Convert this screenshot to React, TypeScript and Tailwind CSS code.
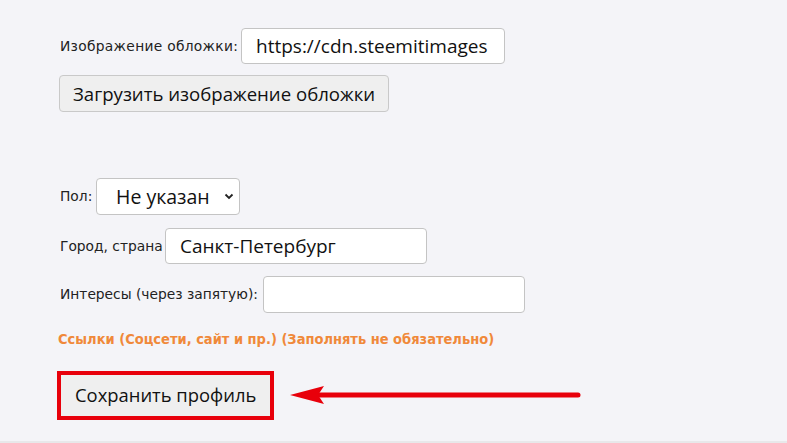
import React from "react";

const labelFont = { fontFamily: "'DejaVu Sans', Tahoma, sans-serif" };

const Field = ({ label, labelCls, children }: { label: string; labelCls: string; children: React.ReactNode }) => (
    <div className="flex items-center gap-[3px]">
        <span className={`text-[13.8px] text-[#222] whitespace-nowrap ${labelCls}`} style={labelFont}>{label}</span>
        {children}
    </div>
);

const inputCls =
    "h-[36px] rounded-[4px] border border-[#c4c4c4] bg-white px-[14px] text-[19px] text-[#111] outline-none";

export default function App() {
    return (
        <div className="w-[787px] h-[443px] bg-[#f4f4f8] border-b-[2px] border-[#e8e8ea] overflow-hidden font-['Open_Sans',sans-serif]">
            <div className="flex flex-col items-start pl-[60px] pt-[28px]">
                <Field label="Изображение обложки:" labelCls="w-[178px] tracking-[0.3px]">
                    <input className={`${inputCls} w-[264px]`} defaultValue="https://cdn.steemitimages" readOnly />
                </Field>

                <button className="mt-[11px] ml-[-1px] h-[37px] rounded-[4px] border border-[#c9c9c9] bg-[#efefef] px-[13px] text-[18.6px] text-[#111]">
                    Загрузить изображение обложки
                </button>

                <div className="mt-[66px]">
                    <Field label="Пол:" labelCls="w-[33px]">
                        <div className="relative">
                            <select className="h-[37px] w-[144px] appearance-none rounded-[4px] border border-[#c4c4c4] bg-white pl-[19px] text-[19.5px] text-[#111] outline-none">
                                <option>Не указан</option>
                            </select>
                            <svg className="pointer-events-none absolute right-[6px] top-[15px]" width="10" height="7" viewBox="0 0 10 7">
                                <path d="M1.5 1.5 L5 5 L8.5 1.5" fill="none" stroke="#222" strokeWidth="1.8" />
                            </svg>
                        </div>
                    </Field>
                </div>

                <div className="mt-[13px]">
                    <Field label="Город, страна" labelCls="w-[102px]">
                        <input className={`${inputCls} w-[262px]`} defaultValue="Санкт-Петербург" readOnly />
                    </Field>
                </div>

                <div className="mt-[12px]">
                    <Field label="Интересы (через запятую):" labelCls="w-[200px]">
                        <input className={`${inputCls} w-[262px] h-[37px]`} defaultValue="" readOnly />
                    </Field>
                </div>

                <p
                    className="mt-[16px] ml-[-2px] text-[14.5px] font-bold text-[#f0893a]"
                    style={{ fontFamily: "'DejaVu Sans Condensed', Tahoma, sans-serif" }}
                >
                    Ссылки (Соцсети, сайт и пр.) (Заполнять не обязательно)
                </p>

                <div className="mt-[20px] ml-[-3px] flex items-center">
                    <div className="border-[4px] border-[#e8000b]">
                        <button className="h-[41px] bg-[#efefef] px-[14px] text-[18.4px] text-[#111]">
                            Сохранить профиль
                        </button>
                    </div>
                    <svg className="ml-[16px]" width="292" height="22" viewBox="0 0 292 22">
                        <path d="M14 11 L288 11" stroke="#e8000b" strokeWidth="5" strokeLinecap="round" />
                        <path d="M0 11 L34 2 L28 11 L34 20 Z" fill="#e8000b" />
                    </svg>
                </div>
            </div>
        </div>
    );
}
